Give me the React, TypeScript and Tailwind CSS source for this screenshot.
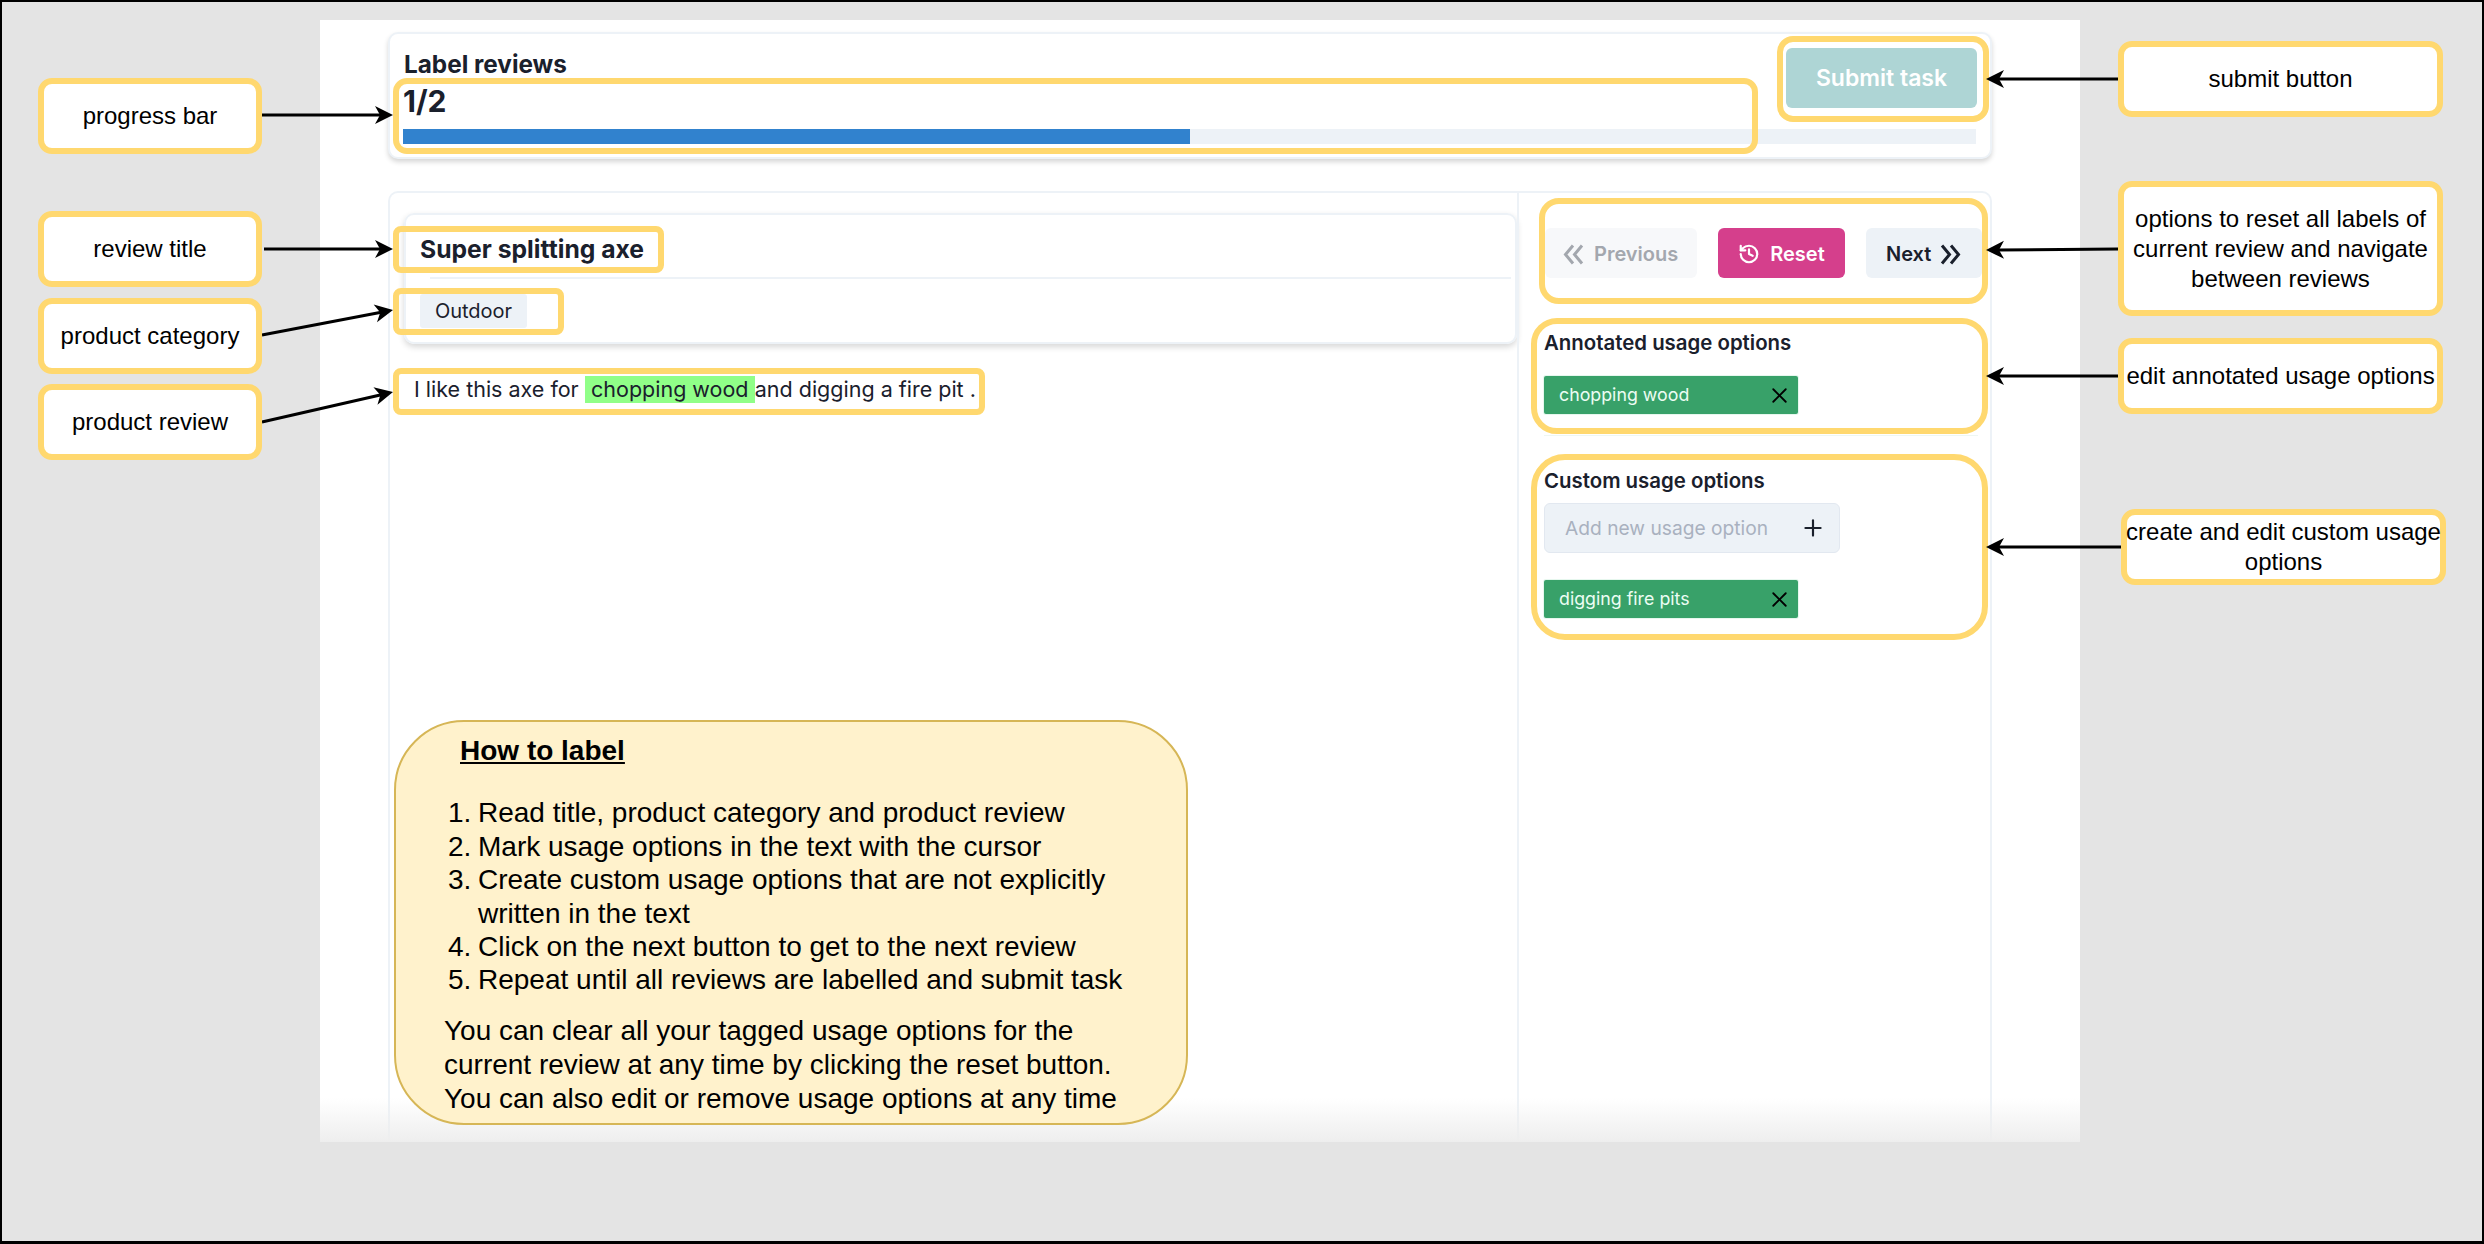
import { History, Plus, X } from "lucide-react";

function Arrow({ x1, y1, x2, y2 }: { x1: number; y1: number; x2: number; y2: number }) {
  const a = Math.atan2(y2 - y1, x2 - x1);
  const pt = (d: number, s: number) => `${x2 - d * Math.cos(a) - s * Math.sin(a)},${y2 - d * Math.sin(a) + s * Math.cos(a)}`;
  return (
    <g>
      <line x1={x1} y1={y1} x2={x2 - 12 * Math.cos(a)} y2={y2 - 12 * Math.sin(a)} stroke="#000" strokeWidth={3} />
      <polygon points={`${x2},${y2} ${pt(18, 9)} ${pt(13, 0)} ${pt(18, -9)}`} fill="#000" />
    </g>
  );
}

function DoubleChevron({ flip }: { flip?: boolean }) {
  return (
    <svg className={flip ? "h-[21px] w-[21px] shrink-0 -scale-x-100" : "h-[21px] w-[21px] shrink-0"} viewBox="0 0 21 21" fill="none" stroke="currentColor" strokeWidth={3}>
      <path d="M10 1.5 L2.5 10.5 L10 19.5" />
      <path d="M19 1.5 L11.5 10.5 L19 19.5" />
    </svg>
  );
}

function Callout({ className, children }: { className: string; children: React.ReactNode }) {
  return (
    <div className={`absolute flex items-center justify-center whitespace-nowrap rounded-[14px] border-[6px] border-[#ffd86f] bg-white text-center font-['Liberation_Sans',Arial,sans-serif] text-[24px] leading-[30px] text-black ${className}`}>
      <div>{children}</div>
    </div>
  );
}

function Mark({ className }: { className: string }) {
  return <div className={`absolute border-[6px] border-[#ffd86f] ${className}`} />;
}

function Tag({ label }: { label: string }) {
  return (
    <div className="flex h-[38px] w-[254px] items-center justify-between rounded-[2px] bg-[#38a169] pl-[15px] pr-[6px] text-[17.8px] text-[#ecfdf3] shadow-[0_0_0_1px_#e6f7ee]">
      <span>{label}</span>
      <X className="h-[25px] w-[25px] text-black" strokeWidth={1.75} />
    </div>
  );
}

export default function App() {
  return (
    <div className="relative h-[1244px] w-[2484px] overflow-hidden border-x-2 border-t-2 border-b-[3px] border-black bg-[#e4e4e4] pl-[318px] pt-[18px]">
      <main className="relative flex h-[1122px] w-[1760px] flex-col gap-[32px] overflow-hidden bg-white pl-[68px] pr-[88px] pt-[12px] font-['Inter',sans-serif] text-[#1a202c]">
        <section className="flex h-[127px] shrink-0 flex-col rounded-[10px] border-2 border-[#edf2f7] bg-white pl-[13px] pr-[13px] shadow-[0_3px_5px_rgba(0,0,0,0.16)]">
          <div className="flex h-[95px] shrink-0 items-start justify-between pt-[14px]">
            <div className="pt-[1px]">
              <h1 className="pl-[1px] text-[24.3px] font-bold leading-[30px]">Label reviews</h1>
              <div className="mt-[4px] text-[30px] font-bold leading-[36px]">1/2</div>
            </div>
            <button className="h-[60px] w-[191px] rounded-[6px] bg-[#aed5d5] text-[23px] font-semibold text-white">Submit task</button>
          </div>
          <div className="h-[15px] w-[1573px] shrink-0 bg-[#edf2f7]">
            <div className="h-full w-1/2 bg-[#3182ce]" />
          </div>
        </section>

        <section className="flex min-h-0 flex-1 rounded-t-[10px] border-2 border-b-0 border-[#edf2f7] bg-white">
          <div className="w-[1127px] shrink-0 pl-[14px] pt-[20px]">
            <div className="flex h-[131px] flex-col rounded-[10px] border-2 border-[#edf2f7] shadow-[0_3px_6px_rgba(0,0,0,0.16)]">
              <h2 className="flex h-[62px] shrink-0 items-end pb-[13px] pl-[14px] text-[24.7px] font-bold leading-[30px]">Super splitting axe</h2>
              <div className="ml-[24px] mr-[4px] h-[2px] bg-[#edf2f7]" />
              <div className="pl-[14px] pt-[15px]">
                <span className="inline-flex h-[34px] w-[107px] items-center justify-center rounded-[3px] bg-[#edf2f7] text-[20px]">Outdoor</span>
              </div>
            </div>
            <p className="mt-[32px] flex h-[27px] items-center pl-[10px] text-[21.5px] leading-[27px]">
              <span className="whitespace-pre">I like this axe for </span>
              <span className="flex h-[27px] w-[170px] items-center justify-center bg-[#90ff88]">chopping wood</span>
              <span>and digging a fire pit .</span>
            </p>
          </div>

          <aside className="flex-1 border-l-2 border-[#edf2f7] pl-[25px]">
            <div className="ml-[1px] mt-[35px] flex h-[50px] items-center gap-[21px] whitespace-nowrap">
              <button className="flex h-[50px] w-[152px] shrink-0 items-center gap-[10px] rounded-[6px] bg-[#f7f8fa] pl-[18px] pt-[2px] text-[20px] font-semibold text-[#a3a7ae]">
                <DoubleChevron />
                Previous
              </button>
              <button className="flex h-[50px] w-[127px] shrink-0 items-center justify-center gap-[10px] rounded-[6px] bg-[#d53f8c] pt-[2px] text-[20px] font-semibold text-white">
                <History className="h-[22px] w-[22px]" strokeWidth={2.4} />
                Reset
              </button>
              <button className="flex h-[50px] w-[116px] shrink-0 items-center gap-[9px] rounded-[6px] bg-[#edf2f7] pl-[20px] pt-[2px] text-[20px] font-semibold">
                Next
                <DoubleChevron flip />
              </button>
            </div>

            <h3 className="mt-[52px] text-[20.4px] font-semibold leading-[26px]">Annotated usage options</h3>
            <div className="mt-[20px]"><Tag label="chopping wood" /></div>
            <div className="mr-[12px] mt-[21px] h-[1px] bg-[#eef7f2]" />

            <h3 className="mt-[32px] text-[20.4px] font-semibold leading-[26px]">Custom usage options</h3>
            <div className="mt-[9px] flex h-[50px] w-[296px] items-center justify-between rounded-[6px] border border-[#e2e8f0] bg-[#edf2f7] pl-[20px] pr-[13px]">
              <span className="text-[19.2px] text-[#a9b1bf]">Add new usage option</span>
              <Plus className="h-[26px] w-[26px] text-[#1a202c]" strokeWidth={2} />
            </div>
            <div className="mt-[27px]"><Tag label="digging fire pits" /></div>
          </aside>
        </section>

        <div className="pointer-events-none absolute inset-x-0 bottom-0 h-[44px] bg-gradient-to-b from-transparent to-[#eeeeee]" />
      </main>

      <Mark className="left-[391px] top-[76px] h-[76px] w-[1365px] rounded-[14px]" />
      <Mark className="left-[1775px] top-[34px] h-[86px] w-[212px] rounded-[16px]" />
      <Mark className="left-[391px] top-[224px] h-[47px] w-[271px] rounded-[8px]" />
      <Mark className="left-[391px] top-[286px] h-[47px] w-[171px] rounded-[8px]" />
      <Mark className="left-[391px] top-[366px] h-[47px] w-[592px] rounded-[8px]" />
      <Mark className="left-[1537px] top-[196px] h-[106px] w-[449px] rounded-[20px]" />
      <Mark className="left-[1529px] top-[316px] h-[116px] w-[457px] rounded-[26px]" />
      <Mark className="left-[1529px] top-[452px] h-[186px] w-[457px] rounded-[34px]" />

      <svg className="pointer-events-none absolute left-0 top-0" width={2484} height={1244}>
        <Arrow x1={260} y1={113} x2={391} y2={113} />
        <Arrow x1={262} y1={247} x2={391} y2={247} />
        <Arrow x1={260} y1={333} x2={391} y2={308} />
        <Arrow x1={260} y1={420} x2={391} y2={390} />
        <Arrow x1={2116} y1={77} x2={1984} y2={77} />
        <Arrow x1={2116} y1={247} x2={1984} y2={248} />
        <Arrow x1={2116} y1={374} x2={1984} y2={374} />
        <Arrow x1={2119} y1={545} x2={1984} y2={545} />
      </svg>

      <Callout className="left-[36px] top-[76px] h-[76px] w-[224px]">progress bar</Callout>
      <Callout className="left-[36px] top-[209px] h-[76px] w-[224px]">review title</Callout>
      <Callout className="left-[36px] top-[296px] h-[76px] w-[224px]">product category</Callout>
      <Callout className="left-[36px] top-[382px] h-[76px] w-[224px]">product review</Callout>
      <Callout className="left-[2116px] top-[39px] h-[76px] w-[325px]">submit button</Callout>
      <Callout className="left-[2116px] top-[179px] h-[135px] w-[325px]">options to reset all labels of<br />current review and navigate<br />between reviews</Callout>
      <Callout className="left-[2116px] top-[336px] h-[76px] w-[325px]">edit annotated usage options</Callout>
      <Callout className="left-[2119px] top-[507px] h-[76px] w-[325px]">create and edit custom usage<br />options</Callout>

      <div className="absolute left-[392px] top-[718px] h-[405px] w-[794px] rounded-[70px] border-2 border-[#d6b656] bg-[#fff2cc] pl-[48px] font-['Liberation_Sans',Arial,sans-serif] text-[28px] leading-[33.4px] text-black">
        <h2 className="pl-[16px] pt-[12px] font-bold underline">How to label</h2>
        <ol className="mt-[29px] pl-[4px]">
          <li className="flex"><span className="w-[30px] shrink-0">1.</span>Read title, product category and product review</li>
          <li className="flex"><span className="w-[30px] shrink-0">2.</span>Mark usage options in the text with the cursor</li>
          <li className="flex"><span className="w-[30px] shrink-0">3.</span><span>Create custom usage options that are not explicitly<br />written in the text</span></li>
          <li className="flex"><span className="w-[30px] shrink-0">4.</span>Click on the next button to get to the next review</li>
          <li className="flex"><span className="w-[30px] shrink-0">5.</span>Repeat until all reviews are labelled and submit task</li>
        </ol>
        <p className="mt-[17px] leading-[34px]">You can clear all your tagged usage options for the<br />current review at any time by clicking the reset button.<br />You can also edit or remove usage options at any time</p>
      </div>
    </div>
  );
}
